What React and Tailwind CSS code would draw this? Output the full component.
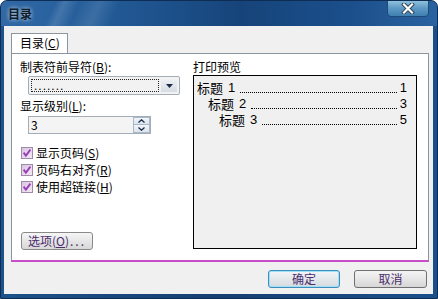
import React from "react";

function Check({ label, acc }) {
  return (
    <div className="flex items-center h-[17px] ml-[1px]">
      <svg width="12" height="12" viewBox="0 0 12 12" className="shrink-0">
        <defs>
          <linearGradient id="cbg" x1="0" y1="0" x2="1" y2="1">
            <stop offset="0" stopColor="#d9c3e0" />
            <stop offset="1" stopColor="#f4eaf6" />
          </linearGradient>
        </defs>
        <rect x="0.5" y="0.5" width="11" height="11" fill="url(#cbg)" stroke="#a08aaa" />
        <path d="M2.6 5.6 L4.9 8.6 L9.4 2.6" fill="none" stroke="#9a3fb4" strokeWidth="1.9" />
      </svg>
      <span className="ml-[3px] leading-[14px]">
        {label}(<span className="underline">{acc}</span>)
      </span>
    </div>
  );
}

function Line({ pad, n, p }) {
  return (
    <div className={`flex h-[16px] ${pad}`}>
      <span className="leading-[16px] h-[16px]">标题</span>
      <span className="leading-[16px] h-[16px] ml-[5px] font-['Liberation_Sans',sans-serif]">{n}</span>
      <span className="flex-1 self-end ml-[5px] mr-[3px] mb-[3px] border-b border-dotted border-black" />
      <span className="leading-[16px] h-[16px] font-['Liberation_Sans',sans-serif]">{p}</span>
    </div>
  );
}

export default function App() {
  return (
    <div className="w-[438px] h-[299px] bg-white font-['Noto_Sans_CJK_SC',sans-serif] text-[12px] text-black">
      <div className="w-[438px] h-[299px] flex flex-col rounded-t-[7px] overflow-hidden bg-[linear-gradient(to_right,#1d5189,#163f72_50%,#1c4f8a)] border border-[#0e2d55]">
        {/* Title bar */}
        <div className="relative h-[25px] shrink-0 flex items-center pl-[7px] pt-[1px] bg-[linear-gradient(115deg,transparent_50px,rgba(255,255,255,0.13)_58px,transparent_72px,rgba(255,255,255,0.11)_90px,transparent_108px),linear-gradient(to_right,#3069a6,#225a96_25%,#16447a_55%,#1b4f8b_80%,#2a63a1)]">
          <span className="font-bold text-[12px] text-[#0f1c2c] [text-shadow:0_0_4px_rgba(255,255,255,0.8)]">目录</span>
          <div className="absolute right-[8px] top-[-1px] w-[42px] h-[17px] rounded-b-[4px] border border-[#1d4a78] bg-[linear-gradient(to_bottom,#8fc0dc,#5c98c2_50%,#3f7fb0)] flex items-center justify-center">
            <svg width="14" height="11" viewBox="0 0 14 11">
              <path d="M3 1.5 L11 9.5 M11 1.5 L3 9.5" stroke="#2a4058" strokeWidth="4" strokeLinecap="square" />
              <path d="M3 1.5 L11 9.5 M11 1.5 L3 9.5" stroke="#ffffff" strokeWidth="2.2" strokeLinecap="square" />
            </svg>
          </div>
        </div>

        {/* Client */}
        <div className="flex-1 ml-[3px] mr-[4px] mb-[4px] bg-[#f0f0f0] flex flex-col pl-[7px] pr-[4px] pt-[7px]">
          {/* Tab */}
          <div className="flex h-[20px]">
            <div className="relative z-10 w-[57px] h-[20px] -mb-px bg-white border border-b-0 border-[#8c96a0] pl-[8px] leading-[18px]">
              目录(<span className="underline">C</span>)
            </div>
          </div>
          {/* Page */}
          <div className="h-[209px] bg-white border-x border-t border-[#8c96a0] border-b-2 border-b-[#c84cc8] flex">
            {/* Left column */}
            <div className="w-[181px] pl-[8px] pt-[6px] flex flex-col">
              <div className="h-[14px] leading-[14px]">
                制表符前导符(<span className="underline">B</span>):
              </div>
              <div className="ml-[8px] mt-[2px] w-[152px] h-[19px] border border-[#a4acb6] rounded-[2px] bg-[#f2f2f2] flex p-[2px]">
                <div className="flex-1 border border-dotted border-[#222] leading-[12px] pl-[2px] text-[12px] font-['Liberation_Sans',sans-serif] tracking-[1px]">
                  .......
                </div>
                <div className="ml-[2px] w-[16px] bg-[linear-gradient(to_bottom,#eef1f5,#d6dce4)] flex items-center justify-center">
                  <svg width="7" height="4" viewBox="0 0 7 4">
                    <path d="M0 0 L7 0 L3.5 4 Z" fill="#1c2a4a" />
                  </svg>
                </div>
              </div>
              <div className="mt-[4px] h-[14px] leading-[14px]">
                显示级别(<span className="underline">L</span>):
              </div>
              <div className="ml-[8px] mt-[3px] w-[123px] h-[18px] border border-[#a4acb6] bg-[#f4f4f4] flex items-center">
                <span className="flex-1 pl-[2px] leading-[14px]">3</span>
                <div className="w-[17px] h-[16px] flex flex-col">
                  <div className="h-[8px] border border-[#a9b9cc] bg-[linear-gradient(to_bottom,#f3f6fa,#dbe3ec)] flex items-center justify-center">
                    <svg width="7" height="4" viewBox="0 0 7 4">
                      <path d="M0.5 3.5 L3.5 0.8 L6.5 3.5" fill="none" stroke="#1c2a4a" strokeWidth="1.3" />
                    </svg>
                  </div>
                  <div className="h-[8px] border border-t-0 border-[#a9b9cc] bg-[linear-gradient(to_bottom,#f3f6fa,#dbe3ec)] flex items-center justify-center">
                    <svg width="7" height="4" viewBox="0 0 7 4">
                      <path d="M0.5 0.5 L3.5 3.2 L6.5 0.5" fill="none" stroke="#1c2a4a" strokeWidth="1.3" />
                    </svg>
                  </div>
                </div>
              </div>
              <div className="mt-[10px] flex flex-col">
                <Check label="显示页码" acc="S" />
                <Check label="页码右对齐" acc="R" />
                <Check label="使用超链接" acc="H" />
              </div>
              <div className="ml-[1px] mt-[37px] w-[72px] h-[18px] border border-[#8a8a8a] rounded-[3px] bg-[linear-gradient(to_bottom,#f6f6f6,#e6e6e6_50%,#d8d8d8)] flex items-center justify-center text-[#4b2c6d] leading-[14px]">
                选项(<span className="underline">O</span>)<span className="tracking-[2px] ml-[1px]">...</span>
              </div>
            </div>
            {/* Right column */}
            <div className="w-[224px] pt-[6px] flex flex-col">
              <div className="h-[14px] leading-[14px]">打印预览</div>
              <div className="mt-[1px] h-[174px] border border-black bg-[#f0f0f0] pt-[4px] pr-[9px] text-[13px]">
                <Line pad="pl-[3px]" n="1" p="1" />
                <Line pad="pl-[14px]" n="2" p="3" />
                <Line pad="pl-[25px]" n="3" p="5" />
              </div>
            </div>
          </div>
          {/* Buttons */}
          <div className="mt-[8px] flex justify-end gap-[14px] mr-[2px]">
            <div className="w-[72px] h-[18px] rounded-[3px] border border-[#3b8dbd] shadow-[inset_0_0_0_1px_#9fe0f4] bg-[linear-gradient(to_bottom,#f4f6f8,#e3e8ec_50%,#d3dade)] flex items-center justify-center text-[#4b2c6d] leading-[14px]">
              确定
            </div>
            <div className="w-[73px] h-[18px] rounded-[3px] border border-[#707070] bg-[linear-gradient(to_bottom,#f4f4f4,#e6e6e6_50%,#d6d6d6)] flex items-center justify-center text-[#4b2c6d] leading-[14px]">
              取消
            </div>
          </div>
        </div>
      </div>
    </div>
  );
}
